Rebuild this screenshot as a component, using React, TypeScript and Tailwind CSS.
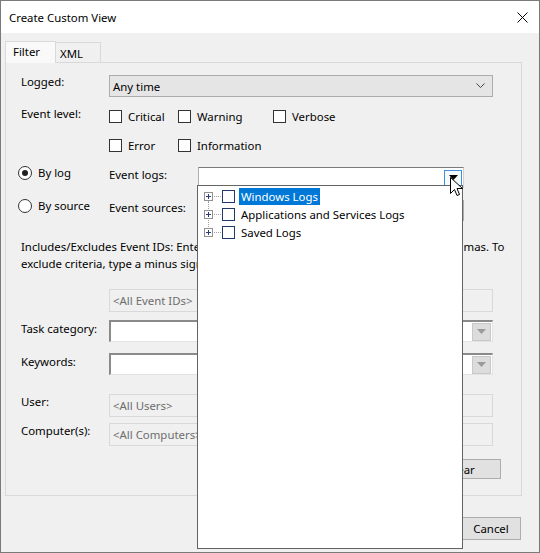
import React from "react";

const font = { fontFamily: '"Noto Sans", "Liberation Sans", sans-serif' };

function Check({ label, w }: { label: string; w: string }) {
  return (
    <div className={`flex items-center ${w}`}>
      <div className="w-[13px] h-[13px] border border-[#333] bg-white shrink-0" />
      <span className="ml-[6px]">{label}</span>
    </div>
  );
}

function Radio({ label, on }: { label: string; on?: boolean }) {
  return (
    <div className="flex items-center">
      <div className="w-[14px] h-[14px] rounded-full border border-[#333] bg-white flex items-center justify-center shrink-0">
        {on && <div className="w-[6px] h-[6px] rounded-full bg-[#222]" />}
      </div>
      <span className="ml-[6px]">{label}</span>
    </div>
  );
}

function DisabledField({ text }: { text: string }) {
  return (
    <div className="w-[384px] h-[23px] border border-[#d9d9d9] bg-[#f0f0f0] text-[#6d6d6d] flex items-center pl-[3px]">
      {text}
    </div>
  );
}

function SunkenCombo() {
  return (
    <div className="w-[384px] h-[22px] border-t-2 border-l-2 border-t-[#8a8a8a] border-l-[#8a8a8a] border-r border-b border-r-[#e3e3e3] border-b-[#e3e3e3] bg-white flex justify-end items-center pr-[1px]">
      <div className="w-[19px] h-[18px] bg-[#dcdcdc] border border-[#c8c8c8] flex items-center justify-center">
        <svg width="9" height="5" viewBox="0 0 9 5">
          <path d="M0 0 H9 L4.5 5 Z" fill="#9a9a9a" />
        </svg>
      </div>
    </div>
  );
}

function PlusBox() {
  return (
    <div className="w-[9px] h-[9px] border border-[#919191] bg-white flex items-center justify-center relative">
      <div className="absolute w-[5px] h-px bg-[#2b3d73]" />
      <div className="absolute h-[5px] w-px bg-[#2b3d73]" />
    </div>
  );
}

function TreeRow({ label, sel }: { label: string; sel?: boolean }) {
  return (
    <div className="h-[18px] flex items-center">
      <div className="ml-[6px]">
        <PlusBox />
      </div>
      <div className="w-[7px] border-t border-dotted border-[#a0a0a0] mx-[1px]" />
      <div className="w-[13px] h-[13px] border border-[#1f3a68] bg-white" />
      <div
        className={`ml-[4px] h-[17px] flex items-center px-[2px] ${
          sel ? "bg-[#0078d7] text-white" : "text-black"
        }`}
      >
        {label}
      </div>
    </div>
  );
}

export default function App() {
  return (
    <div
      className="w-[540px] h-[553px] relative border border-[#7a7a7a] bg-[#f0f0f0] text-[11.4px] leading-[15px] text-black overflow-hidden"
      style={font}
    >
      {/* Title bar */}
      <div className="h-[32px] bg-white flex items-center justify-between pl-[8px] pr-[11px]">
        <span>Create Custom View</span>
        <svg width="11" height="11" viewBox="0 0 11 11">
          <path d="M0.5 0.5 L10.5 10.5 M10.5 0.5 L0.5 10.5" stroke="#000" strokeWidth="1" />
        </svg>
      </div>

      {/* Tabs */}
      <div className="pl-[4px] pt-[7px] flex items-end h-[29px]">
        <div className="w-[51px] h-[22px] bg-[#f9f9f9] border border-b-0 border-[#d9d9d9] flex items-start pl-[7px] pt-[2px] relative z-10 -mb-px">
          Filter
        </div>
        <div className="w-[45px] h-[20px] bg-[#f0f0f0] border border-b-0 border-l-0 border-[#d9d9d9] flex items-start pl-[4px] pt-[3px]">
          XML
        </div>
      </div>

      {/* Tab panel */}
      <div className="ml-[4px] w-[517px] h-[434px] border border-[#d9d9d9] bg-[#f0f0f0] pl-[15px] flex flex-col">
        {/* Logged */}
        <div className="flex mt-[12px] h-[22px]">
          <div className="w-[88px] -mt-[1px]">Logged:</div>
          <div className="w-[384px] h-[22px] bg-[#e5e5e5] border border-[#adadad] flex items-center justify-between pl-[3px] pr-[7px]">
            <span>Any time</span>
            <svg width="9" height="6" viewBox="0 0 9 6">
              <path d="M0.5 0.5 L4.5 4.5 L8.5 0.5" stroke="#444" fill="none" strokeWidth="1" />
            </svg>
          </div>
        </div>

        {/* Event level */}
        <div className="flex mt-[10px] h-[20px]">
          <div className="w-[88px] -mt-[1px]">Event level:</div>
          <div className="flex items-start pt-[2px]">
            <Check label="Critical" w="w-[69px]" />
            <Check label="Warning" w="w-[95px]" />
            <Check label="Verbose" w="w-[90px]" />
          </div>
        </div>
        <div className="flex mt-[9px] h-[20px]">
          <div className="w-[88px]" />
          <div className="flex items-start pt-[2px]">
            <Check label="Error" w="w-[69px]" />
            <Check label="Information" w="w-[95px]" />
          </div>
        </div>

        {/* By log */}
        <div className="flex mt-[10px] h-[22px] -ml-[3px]">
          <div className="w-[91px] -mt-[1px]">
            <Radio label="By log" on />
          </div>
          <div className="w-[89px] pt-[1px]">Event logs:</div>
          <div className="w-[266px] h-[21px] mt-[1px] bg-white border-t border-t-[#7a7a7a] border-l border-l-[#b0b0b0] border-r border-r-[#d0d0d0] flex justify-end items-start pt-[2px] pr-[1px]">
            <div className="w-[18px] h-[17px] border border-[#3c8ee0] bg-[#f5faff] flex items-start justify-center pt-[4px]">
              <svg width="9" height="5" viewBox="0 0 9 5">
                <path d="M0 0 H9 L4.5 5 Z" fill="#000" />
              </svg>
            </div>
          </div>
        </div>

        {/* By source */}
        <div className="flex mt-[11px] h-[22px] -ml-[3px]">
          <div className="w-[91px] -mt-[1px]">
            <Radio label="By source" />
          </div>
          <div className="w-[89px] pt-[1px]">Event sources:</div>
          <div className="w-[266px] h-[21px] mt-[1px] bg-white border border-[#adadad]" />
        </div>

        {/* Description */}
        <div className="mt-[17px] w-[497px] leading-[17px]">
          Includes/Excludes Event IDs: Enter ID numbers and/or ID ranges separated by commas. To exclude criteria, type a minus sign first.
        </div>

        <div className="flex mt-[17px]">
          <div className="w-[88px]" />
          <DisabledField text="<All Event IDs>" />
        </div>

        <div className="flex mt-[8px] items-start h-[22px]">
          <div className="w-[88px] pt-[1px]">Task category:</div>
          <SunkenCombo />
        </div>

        <div className="flex mt-[11px] items-start h-[22px]">
          <div className="w-[88px] pt-[1px]">Keywords:</div>
          <SunkenCombo />
        </div>

        <div className="flex mt-[19px] h-[23px]">
          <div className="w-[88px]">User:</div>
          <DisabledField text="<All Users>" />
        </div>

        <div className="flex mt-[6px] h-[23px]">
          <div className="w-[88px]">Computer(s):</div>
          <DisabledField text="<All Computers>" />
        </div>

        <div className="flex justify-end mt-[13px] pr-[20px]">
          <div className="w-[80px] h-[20px] bg-[#e1e1e1] border border-[#adadad] flex items-center justify-center">
            Clear
          </div>
        </div>
      </div>

      {/* Bottom buttons */}
      <div className="flex justify-end gap-[8px] mt-[21px] pr-[18px]">
        <div className="w-[75px] h-[23px] bg-[#e1e1e1] border border-[#adadad] flex items-center justify-center">
          OK
        </div>
        <div className="w-[60px] h-[23px] bg-[#e1e1e1] border border-[#adadad] flex items-center justify-center">
          Cancel
        </div>
      </div>

      {/* Drop-down popup */}
      <div className="absolute left-[196px] top-[184px] w-[266px] h-[364px] bg-white border border-[#646464] pt-[1px]">
        <div className="relative">
          <div className="absolute left-[10px] top-[14px] h-[28px] border-l border-dotted border-[#a0a0a0]" />
          <TreeRow label="Windows Logs" sel />
          <TreeRow label="Applications and Services Logs" />
          <TreeRow label="Saved Logs" />
        </div>
      </div>

      {/* Mouse cursor */}
      <svg className="absolute left-[449px] top-[176px]" width="13" height="20" viewBox="0 0 13 20">
        <path
          d="M0.5 0.5 L0.5 16.5 L4.5 12.5 L7 18.5 L9.5 17.5 L7 11.5 L12.5 11.5 Z"
          fill="#fff"
          stroke="#000"
          strokeWidth="1"
          strokeLinejoin="miter"
        />
      </svg>
    </div>
  );
}
